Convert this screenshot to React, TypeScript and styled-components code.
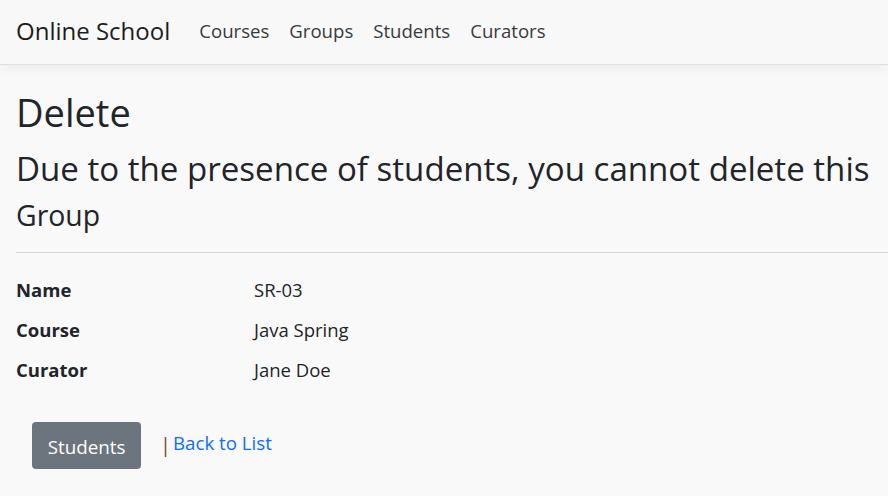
import React from "react";
import styled, { createGlobalStyle } from "styled-components";

const Global = createGlobalStyle`
  html, body { margin: 0; padding: 0; }
  body {
    background: #f9f9f9;
    font-family: "Open Sans", "Noto Sans", sans-serif;
    color: #212529;
    font-size: 18.5px;
    overflow: hidden;
  }
`;

const NavBar = styled.nav`
  height: 65px;
  display: flex;
  align-items: center;
  padding: 0 16px 3px;
  box-sizing: border-box;
  background: #f8f8f8;
  border-bottom: 1px solid #dedede;
  box-shadow: 0 4px 12px rgba(0, 0, 0, 0.05);
`;

const Brand = styled.a`
  font-size: 24px;
  color: #1d1d1d;
  margin-right: 29px;
  text-decoration: none;
`;

const NavList = styled.div`
  display: flex;
  gap: 20px;
`;

const NavLink = styled.a`
  font-size: 18.6px;
  color: #383a3c;
  text-decoration: none;
`;

const Main = styled.main`
  padding: 0 0 0 16px;
`;

const Title = styled.h1`
  font-size: 38px;
  font-weight: 400;
  margin: 25px 0 0;
  line-height: 1.2;
`;

const Subtitle = styled.h2`
  font-size: 33.1px;
  font-weight: 400;
  margin: 13px 0 0;
  line-height: 1.2;
  white-space: nowrap;
`;

const Entity = styled.h3`
  font-size: 28.4px;
  font-weight: 400;
  margin: 10px 0 0;
  line-height: 1.2;
`;

const Rule = styled.hr`
  border: 0;
  border-top: 1px solid #d6d6d6;
  margin: 20px 0 24px;
`;

const Details = styled.dl`
  display: grid;
  grid-template-columns: 238px 1fr;
  row-gap: 14px;
  margin: 0;
  line-height: 26px;
`;

const Term = styled.dt`
  font-weight: 700;
  margin: 0;
`;

const Value = styled.dd`
  margin: 0;
`;

const Actions = styled.div`
  display: flex;
  align-items: center;
  padding: 39px 0 0 16px;
`;

const Button = styled.a`
  display: inline-flex;
  align-items: center;
  justify-content: center;
  height: 47px;
  width: 109px;
  box-sizing: border-box;
  background: #6c757d;
  color: #fff;
  border-radius: 4px;
  font-size: 18.8px;
  text-decoration: none;
  padding-top: 2px;
`;

const Pipe = styled.span`
  color: #7d4526;
  margin-left: 19px;
  margin-right: 2px;
  font-size: 20px;
  margin-top: -3px;
`;

const Link = styled.a`
  color: #0d6efd;
  font-size: 18.7px;
  text-decoration: none;
  margin-top: -6px;
`;

export default function App() {
  return (
    <>
      <Global />
      <NavBar>
        <Brand href="#">Online School</Brand>
        <NavList>
          <NavLink href="#">Courses</NavLink>
          <NavLink href="#">Groups</NavLink>
          <NavLink href="#">Students</NavLink>
          <NavLink href="#">Curators</NavLink>
        </NavList>
      </NavBar>
      <Main>
        <Title>Delete</Title>
        <Subtitle>Due to the presence of students, you cannot delete this</Subtitle>
        <Entity>Group</Entity>
        <Rule />
        <Details>
          <Term>Name</Term>
          <Value>SR-03</Value>
          <Term>Course</Term>
          <Value>Java Spring</Value>
          <Term>Curator</Term>
          <Value>Jane Doe</Value>
        </Details>
        <Actions>
          <Button href="#">Students</Button>
          <Pipe>|</Pipe>
          <Link href="#">Back to List</Link>
        </Actions>
      </Main>
    </>
  );
}
